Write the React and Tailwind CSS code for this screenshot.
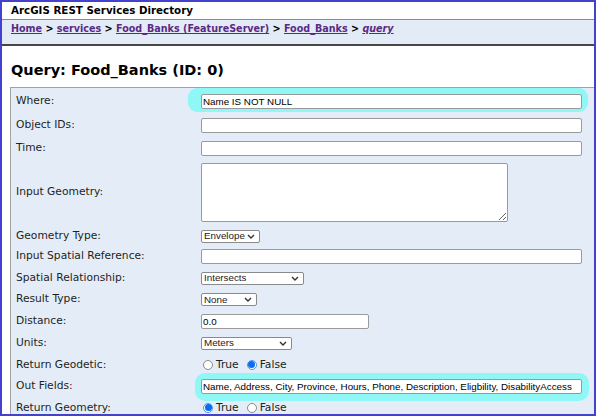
import React from 'react'

const verdana = { fontFamily: '"DejaVu Sans", Verdana, sans-serif' }

function Chevron() {
  return (
    <svg width="8" height="5" viewBox="0 0 8 5" className="shrink-0">
      <path d="M1 1 L4 4 L7 1" fill="none" stroke="#333" strokeWidth="1.4" />
    </svg>
  )
}

function Select({ value, width }) {
  return (
    <div
      className={`flex h-[13px] items-center justify-between rounded-[2px] border border-[#8a8a8a] bg-white pl-[2px] pr-[4px] font-['Liberation_Sans',Arial,sans-serif] text-[9.8px] leading-none text-[#222] ${width}`}
    >
      <span>{value}</span>
      <Chevron />
    </div>
  )
}

function TextInput({ value = '', width = 'w-[381px]', height = 'h-[15px]' }) {
  return (
    <input
      readOnly
      value={value}
      className={`relative block ${width} ${height} rounded-[2px] border border-[#9a9a9a] bg-white px-[1px] font-['Liberation_Sans',Arial,sans-serif] text-[9.8px] leading-none text-black outline-none`}
    />
  )
}

function Radio({ checked, label }) {
  return (
    <span className="flex items-center">
      {checked ? (
        <span className="flex h-[10px] w-[10px] items-center justify-center rounded-full border border-[#4a90f7] bg-white">
          <span className="h-[7px] w-[7px] rounded-full bg-[#0a6cf0]" />
        </span>
      ) : (
        <span className="h-[10px] w-[10px] rounded-full border border-[#8a8a8a] bg-white" />
      )}
      <span className="ml-[3px] text-[10.7px] leading-none text-[#222]" style={verdana}>
        {label}
      </span>
    </span>
  )
}

function Row({ label, h, children }) {
  return (
    <div className={`flex items-center ${h}`}>
      <div className="w-[185px] shrink-0 text-[10.7px] leading-none text-[#1e1e1e]" style={verdana}>
        {label}
      </div>
      <div className="flex items-center">{children}</div>
    </div>
  )
}

export default function App() {
  return (
    <div className="h-[418px] w-[598px] overflow-hidden bg-white">
      <div className="h-[416px] w-[596px] overflow-hidden border-2 border-[#4242cf] bg-white">
        {/* Directory header */}
        <div
          className="flex h-[18px] items-center border-b border-[#8c8c8c] pl-[9px] text-[10.3px] font-bold leading-none text-black"
          style={verdana}
        >
          ArcGIS REST Services Directory
        </div>
        <div
          className="h-[26px] border-b-2 border-[#474747] bg-[#e3ecf6] pl-[9px] pt-[2px] text-[9.6px] font-bold leading-[14px]"
          style={verdana}
        >
          <a className="text-[#5a2a86] underline">Home</a>
          <span> &gt; </span>
          <a className="text-[#5a2a86] underline">services</a>
          <span> &gt; </span>
          <a className="text-[#5a2a86] underline">Food_Banks (FeatureServer)</a>
          <span> &gt; </span>
          <a className="text-[#5a2a86] underline">Food_Banks</a>
          <span> &gt; </span>
          <a className="italic text-[#5a2a86] underline">query</a>
        </div>

        <h1
          className="mb-[8px] mt-[15px] pl-[9px] text-[14.5px] font-bold leading-[18px] text-black"
          style={verdana}
        >
          Query: Food_Banks (ID: 0)
        </h1>

        {/* Query form */}
        <div className="ml-[8px] w-[600px] border-l border-t border-[#a3a3a3] bg-[#e4edf7] pl-[5px] pt-[1px]">
          <Row label="Where:" h="h-[24px]">
            <div className="relative">
              <span className="absolute -bottom-[3px] -left-[13px] -right-[6px] -top-[6px] rounded-[9px] bg-[#8ff8f7]" />
              <TextInput value="Name IS NOT NULL" />
            </div>
          </Row>
          <Row label="Object IDs:" h="h-[24px]">
            <TextInput />
          </Row>
          <Row label="Time:" h="h-[22px]">
            <TextInput />
          </Row>
          <Row label="Input Geometry:" h="h-[67px]">
            <textarea
              readOnly
              className="block h-[59px] w-[307px] resize rounded-[2px] border border-[#9a9a9a] bg-white outline-none"
            />
          </Row>
          <Row label="Geometry Type:" h="h-[20px]">
            <Select value="Envelope" width="w-[59px]" />
          </Row>
          <Row label="Input Spatial Reference:" h="h-[21px]">
            <TextInput />
          </Row>
          <Row label="Spatial Relationship:" h="h-[22px]">
            <Select value="Intersects" width="w-[103px]" />
          </Row>
          <Row label="Result Type:" h="h-[21px]">
            <Select value="None" width="w-[56px]" />
          </Row>
          <Row label="Distance:" h="h-[22px]">
            <TextInput value="0.0" width="w-[168px]" />
          </Row>
          <Row label="Units:" h="h-[22px]">
            <Select value="Meters" width="w-[91px]" />
          </Row>
          <Row label="Return Geodetic:" h="h-[22px]">
            <div className="ml-[2px] flex items-center gap-[8px]">
              <Radio label="True" />
              <Radio checked label="False" />
            </div>
          </Row>
          <Row label="Out Fields:" h="h-[21px]">
            <div className="relative">
              <span className="absolute -bottom-[7px] -left-[6px] -right-[7px] -top-[6px] rounded-[10px] bg-[#8ff8f7]" />
              <TextInput value="Name, Address, City, Province, Hours, Phone, Description, Eligbility, DisabilityAccess" />
            </div>
          </Row>
          <Row label="Return Geometry:" h="h-[22px]">
            <div className="ml-[2px] flex items-center gap-[8px]">
              <Radio checked label="True" />
              <Radio label="False" />
            </div>
          </Row>
        </div>
      </div>
    </div>
  )
}
